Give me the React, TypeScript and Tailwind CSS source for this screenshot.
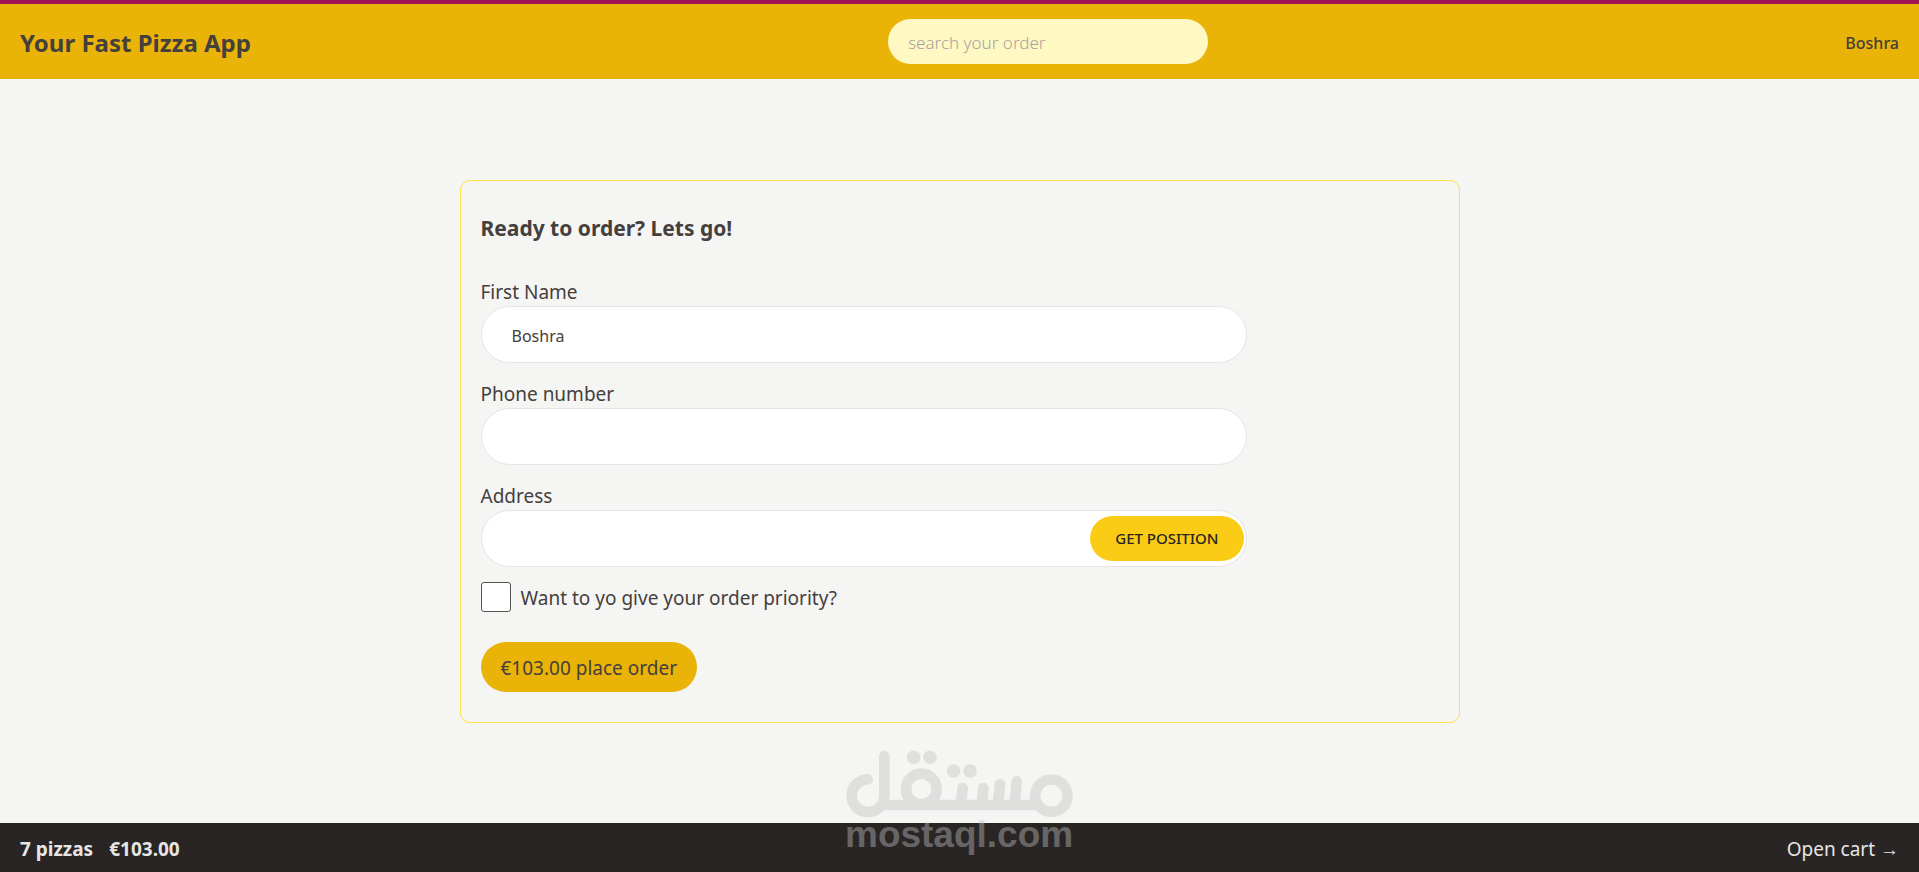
import React, { useState } from 'react';

const CART = { count: 7, total: '€103.00' };

const inputClasses =
  'h-[57px] w-full rounded-full border border-[#e5e5e5] bg-white px-[30px] pt-0.5 text-[16px] text-[#44403c] focus:outline-none focus:ring-2 focus:ring-[#facc15]';

const Header: React.FC<{ username: string }> = ({ username }) => {
  const [query, setQuery] = useState('');

  return (
    <header className="flex items-center justify-between border-t-4 border-[#9f1350] bg-[#eab308] px-5 py-[15px]">
      <a href="/" className="pt-0.5 text-[24px] leading-[35px] font-bold">Your Fast Pizza App</a>
      <form role="search">
        <input
          type="search"
          aria-label="Search your order"
          placeholder="search your order"
          value={query}
          onChange={e => setQuery(e.target.value)}
          className="block h-[45px] w-80 rounded-full bg-[#fef9c3] px-5 pt-0.5 text-[17px] font-light placeholder:text-[#a8a29e] focus:outline-none"
        />
      </form>
      <p className="pt-0.5 text-[16px] font-medium">{username}</p>
    </header>
  );
};

const Field: React.FC<{
  id: string;
  label: string;
  type?: string;
  defaultValue?: string;
  children?: React.ReactNode;
}> = ({ id, label, type = 'text', defaultValue, children }) => (
  <div>
    <label htmlFor={id} className="block text-[19px] leading-7">{label}</label>
    <div className="relative">
      <input id={id} name={id} type={type} defaultValue={defaultValue} className={inputClasses} />
      {children}
    </div>
  </div>
);

const OrderForm: React.FC<{ username: string }> = ({ username }) => {
  const [withPriority, setWithPriority] = useState(false);

  return (
    <div className="w-full max-w-[1000px] rounded-[10px] border border-[#fde047] px-5 py-[30px]">
      <h2 className="mb-8 text-[21px] leading-[35px] font-bold">Ready to order? Lets go!</h2>

      <form onSubmit={e => e.preventDefault()}>
        <div className="flex w-4/5 flex-col gap-[17px]">
          <Field id="customer" label="First Name" defaultValue={username} />
          <Field id="phone" label="Phone number" type="tel" />
          <Field id="address" label="Address">
            <button
              type="button"
              className="absolute top-1.5 right-[3px] h-[45px] w-[154px] rounded-full bg-[#facc15] text-[15px] font-medium text-[#292524] uppercase"
            >
              Get position
            </button>
          </Field>
        </div>

        <div className="mt-[15px] mb-[30px] flex items-center gap-2.5">
          <input
            id="priority"
            type="checkbox"
            checked={withPriority}
            onChange={e => setWithPriority(e.target.checked)}
            className="size-[30px] appearance-none rounded-[3px] border border-[#57534e] bg-white checked:bg-[#facc15]"
          />
          <label htmlFor="priority" className="pt-0.5 text-[19px] leading-7">Want to yo give your order priority?</label>
        </div>

        <button type="submit" className="h-[50px] rounded-full bg-[#eab308] px-5 pt-0.5 text-[19px]">
          {CART.total} place order
        </button>
      </form>
    </div>
  );
};

const CartOverview: React.FC = () => (
  <footer className="flex h-[49px] items-center justify-between bg-[#292524] px-5 pt-1 text-[19px] text-[#e7e5e4]">
    <p className="flex gap-4 font-bold">
      <span>{CART.count} pizzas</span>
      <span>{CART.total}</span>
    </p>
    <a href="/cart">Open cart →</a>
  </footer>
);

const Watermark: React.FC = () => (
  <svg
    viewBox="72 56 696 320"
    role="img"
    aria-label="mostaql.com"
    className="pointer-events-none absolute bottom-4 left-1/2 w-[232px] -translate-x-1/2"
  >
    <g opacity="0.41" fill="none" stroke="#c1c1c1" strokeWidth="32" strokeLinecap="round">
      <path d="M143 147A49 49 0 1 0 193 196V77" />
      <path d="M184 224H654" strokeLinecap="butt" />
      <circle cx="304" cy="176" r="46" />
      <circle cx="694" cy="196" r="48.5" />
      <path d="M428 173L423 220M490 173L486 220M540 161L534 220M590 153L584 220" />
      <g fill="#c1c1c1" stroke="none">
        <circle cx="281" cy="81" r="20.5" />
        <circle cx="330" cy="81" r="20.5" />
        <circle cx="401" cy="122" r="20.5" />
        <circle cx="450" cy="122" r="20.5" />
        <text x="75" y="350" fontSize="111" fontWeight="700" fontFamily="'Liberation Sans', sans-serif">mostaql.com</text>
      </g>
    </g>
  </svg>
);

const App: React.FC = () => {
  const username = 'Boshra';

  return (
    <div className="relative flex min-h-screen flex-col bg-[#f5f5f4] font-['Noto_Sans',sans-serif] text-[#44403c]">
      <Header username={username} />
      <main className="flex flex-1 items-center justify-center pt-px">
        <OrderForm username={username} />
      </main>
      <CartOverview />
      <Watermark />
    </div>
  );
};

export default App;
